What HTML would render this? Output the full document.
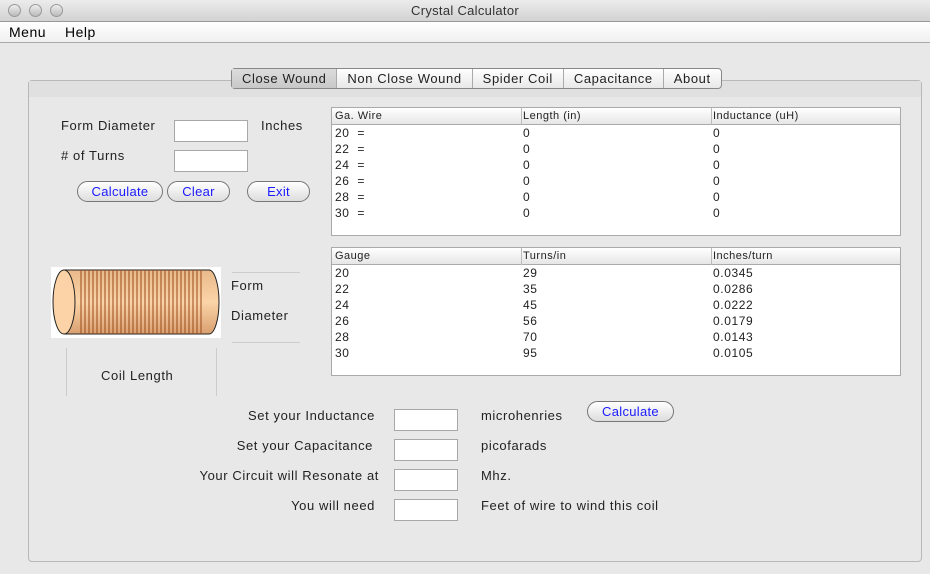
<!DOCTYPE html>
<html><head><style>
*{margin:0;padding:0;box-sizing:border-box}
body{width:930px;height:574px;background:#e8e8e8;font-family:"Liberation Sans",sans-serif;font-size:13px;letter-spacing:.6px;color:#222;position:relative;overflow:hidden}
.a{position:absolute;white-space:nowrap}
.title{left:0;top:0;width:930px;height:22px;background:linear-gradient(#ececec,#d2d2d2);border-bottom:1px solid #999;text-align:center;line-height:22px;color:#333;letter-spacing:.3px}
.dot{width:13px;height:13px;border-radius:50%;background:linear-gradient(#eee,#bbb);border:1px solid #999;top:4px}
.menu{left:0;top:22px;width:930px;height:21px;background:linear-gradient(#fff,#f0f0f0);border-bottom:1px solid #aaa}
.panel{left:28px;top:80px;width:894px;height:482px;border:1px solid #b8b8b8;border-radius:4px;background:#e8e8e8}
.band{left:29px;top:81px;width:892px;height:16px;background:#e0e0e0}
.tabs{left:231px;top:68px;height:21px;border:1px solid #888;border-radius:4px;background:linear-gradient(#fff,#e8e8e8);display:flex}
.tabs div{padding:0 10px;line-height:19px;border-left:1px solid #aaa}
.tabs div:first-child{border-left:none;background:linear-gradient(#ddd,#c8c8c8)}
.in{background:#fff;border:1px solid #a8a8a8;width:74px;height:22px}
.btn{height:21px;border:1px solid #777;border-radius:11px;background:linear-gradient(#fff,#ddd);color:#1a1aff;text-align:center;line-height:19px;letter-spacing:.3px}
.tbl{left:331px;width:570px;height:129px;background:#fff;border:1px solid #aaa;font-size:12px;letter-spacing:.6px}
.th{position:absolute;left:0;top:0;width:568px;height:17px;background:linear-gradient(#fff,#e6e6e6);border-bottom:1px solid #aaa;font-size:11px;line-height:16px;letter-spacing:.5px}
.th span,.r span{position:absolute}
.r{position:absolute;left:0;height:16px;line-height:16px;width:100%}
.c1{left:3px}.c2{left:191px}.c3{left:381px}
.sep{position:absolute;top:0;height:17px;border-left:1px solid #bbb}
</style></head><body>
<div class="a title">Crystal Calculator</div>
<div class="a dot" style="left:8px"></div><div class="a dot" style="left:29px"></div><div class="a dot" style="left:50px"></div>
<div class="a menu"><span class="a" style="left:9px;top:2px;font-size:14px;color:#000;letter-spacing:.5px">Menu</span><span class="a" style="left:65px;top:2px;font-size:14px;color:#000;letter-spacing:.5px">Help</span></div>
<div class="a panel"></div><div class="a band"></div>
<div class="a tabs"><div>Close Wound</div><div>Non Close Wound</div><div>Spider Coil</div><div>Capacitance</div><div>About</div></div>

<div class="a" style="left:61px;top:118px">Form Diameter</div>
<div class="a in" style="left:174px;top:120px"></div>
<div class="a" style="left:261px;top:118px">Inches</div>
<div class="a" style="left:61px;top:148px"># of Turns</div>
<div class="a in" style="left:174px;top:150px"></div>
<div class="a btn" style="left:77px;top:181px;width:86px">Calculate</div>
<div class="a btn" style="left:167px;top:181px;width:63px">Clear</div>
<div class="a btn" style="left:247px;top:181px;width:63px">Exit</div>

<div class="a tbl" style="top:107px"><div class="th"><span class="c1">Ga. Wire</span><span class="c2">Length (in)</span><span class="c3">Inductance (uH)</span><i class="sep" style="left:189px"></i><i class="sep" style="left:379px"></i></div>
<div class="r" style="top:17px"><span class="c1">20 &nbsp;=</span><span class="c2">0</span><span class="c3">0</span></div>
<div class="r" style="top:33px"><span class="c1">22 &nbsp;=</span><span class="c2">0</span><span class="c3">0</span></div>
<div class="r" style="top:49px"><span class="c1">24 &nbsp;=</span><span class="c2">0</span><span class="c3">0</span></div>
<div class="r" style="top:65px"><span class="c1">26 &nbsp;=</span><span class="c2">0</span><span class="c3">0</span></div>
<div class="r" style="top:81px"><span class="c1">28 &nbsp;=</span><span class="c2">0</span><span class="c3">0</span></div>
<div class="r" style="top:97px"><span class="c1">30 &nbsp;=</span><span class="c2">0</span><span class="c3">0</span></div></div>

<div class="a tbl" style="top:247px"><div class="th"><span class="c1">Gauge</span><span class="c2">Turns/in</span><span class="c3">Inches/turn</span><i class="sep" style="left:189px"></i><i class="sep" style="left:379px"></i></div>
<div class="r" style="top:17px"><span class="c1">20</span><span class="c2">29</span><span class="c3">0.0345</span></div>
<div class="r" style="top:33px"><span class="c1">22</span><span class="c2">35</span><span class="c3">0.0286</span></div>
<div class="r" style="top:49px"><span class="c1">24</span><span class="c2">45</span><span class="c3">0.0222</span></div>
<div class="r" style="top:65px"><span class="c1">26</span><span class="c2">56</span><span class="c3">0.0179</span></div>
<div class="r" style="top:81px"><span class="c1">28</span><span class="c2">70</span><span class="c3">0.0143</span></div>
<div class="r" style="top:97px"><span class="c1">30</span><span class="c2">95</span><span class="c3">0.0105</span></div></div>

<svg class="a" style="left:51px;top:267px" width="170" height="71">
<rect width="170" height="71" fill="#fff"/>
<defs><linearGradient id="g" x1="0" y1="0" x2="0" y2="1"><stop offset="0" stop-color="#e9b98a"/><stop offset=".5" stop-color="#fbd4a8"/><stop offset="1" stop-color="#d9a070"/></linearGradient></defs>
<path d="M13 3 H158 A10 32 0 0 1 158 67 H13 Z" fill="url(#g)" stroke="#222"/>
<g stroke="#9a4a1a" stroke-width="1">
<path d="M30 3V67M34 3V67M38 3V67M42 3V67M46 3V67M50 3V67M54 3V67M58 3V67M62 3V67M66 3V67M70 3V67M74 3V67M78 3V67M82 3V67M86 3V67M90 3V67M94 3V67M98 3V67M102 3V67M106 3V67M110 3V67M114 3V67M118 3V67M122 3V67M126 3V67M130 3V67M134 3V67M138 3V67M142 3V67M146 3V67M150 3V67"/></g>
<ellipse cx="13" cy="35" rx="11" ry="32" fill="#fcd3a6" stroke="#222"/>
</svg>
<div class="a" style="left:232px;top:272px;width:68px;border-top:1px solid #ccc"></div>
<div class="a" style="left:232px;top:342px;width:68px;border-top:1px solid #ccc"></div>
<div class="a" style="left:231px;top:278px">Form</div>
<div class="a" style="left:231px;top:308px">Diameter</div>
<div class="a" style="left:66px;top:348px;height:48px;border-left:1px solid #ccc"></div>
<div class="a" style="left:216px;top:348px;height:48px;border-left:1px solid #ccc"></div>
<div class="a" style="left:101px;top:368px">Coil Length</div>

<div class="a" style="right:555px;top:408px">Set your Inductance</div>
<div class="a" style="right:557px;top:438px">Set your Capacitance</div>
<div class="a" style="right:551px;top:468px">Your Circuit will Resonate at</div>
<div class="a" style="right:555px;top:498px">You will need</div>
<div class="a in" style="left:394px;top:409px;width:64px"></div>
<div class="a in" style="left:394px;top:439px;width:64px"></div>
<div class="a in" style="left:394px;top:469px;width:64px"></div>
<div class="a in" style="left:394px;top:499px;width:64px"></div>
<div class="a" style="left:481px;top:408px">microhenries</div>
<div class="a" style="left:481px;top:438px">picofarads</div>
<div class="a" style="left:481px;top:468px">Mhz.</div>
<div class="a" style="left:481px;top:498px">Feet of wire to wind this coil</div>
<div class="a btn" style="left:587px;top:401px;width:87px">Calculate</div>
</body></html>
